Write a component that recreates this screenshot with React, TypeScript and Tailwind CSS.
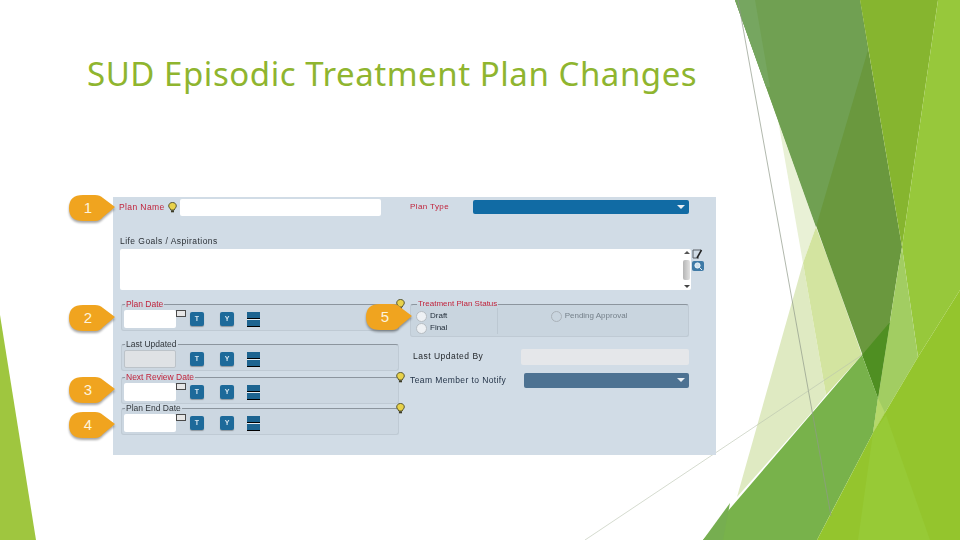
const sans = "font-['Liberation_Sans',Arial,sans-serif]";

function Backdrop() {
  return (
    <svg className="absolute inset-0" width="960" height="540" viewBox="0 0 960 540">
      <polygon points="0,315 36,540 0,540" fill="#9fc63f" />
      <polygon points="778,120 816,227 803,263" fill="#e9f1d6" />
      <polygon points="803,263 826,395 812,412 737,497" fill="#dfeac2" />
      <polygon points="816,227 832,270 862,355 826,395 803,263" fill="#d3e4a0" />
      <polygon points="735,0 860,0 902,247 898,270 878,398 832,270" fill="#6a983e" />
      <polygon points="735,0 860,0 868,50 816,227" fill="#70a052" />
      <polygon points="735,0 755,0 770,87 766,87" fill="#76a660" />
      <polygon points="860,0 938,0 902,247" fill="#86b52f" />
      <polygon points="938,0 960,0 960,290 918,357 902,247" fill="#97c83b" />
      <polygon points="902,247 918,357 873,433 878,398 898,270" fill="#a2cd62" />
      <polygon points="862,355 890,322 878,398" fill="#4f8f22" />
      <polygon points="862,355 878,398 873,433 830,515 817,540 703,540" fill="#78b24b" />
      <polygon points="703,540 730,503 723,540" fill="#76ae50" />
      <polygon points="878,398 873,433 885,413" fill="#b5d86a" />
      <polygon points="960,290 960,540 817,540 873,433 918,357" fill="#94c52d" />
      <polygon points="873,433 858,540 930,540 886,415" fill="#97ca36" />
      <line x1="738" y1="0" x2="831" y2="516" stroke="#8f9a8a" strokeWidth="0.7" />
      <line x1="585" y1="540" x2="862" y2="355" stroke="#b9c2ae" strokeWidth="0.6" />
    </svg>
  );
}

function Callout({ n, className }: { n: number; className: string }) {
  return (
    <div className={`absolute h-[30px] w-[47px] ${className}`}>
      <svg className="absolute inset-0 drop-shadow-[0_2px_1px_rgba(0,0,0,0.35)]" width="47" height="30" viewBox="0 0 47 30">
        <path d="M15 1 H27 Q32 1 35 4 L47 13 L35 23 Q32 27 27 27 H15 Q1 27 1 14 Q1 1 15 1 Z" fill="#f0a41f" />
      </svg>
      <span className={`absolute left-[15px] top-[5px] w-[10px] text-center text-[15px] leading-[18px] text-[#fdf3dc] ${sans}`}>{n}</span>
    </div>
  );
}

function Bulb({ className = '' }: { className?: string }) {
  return (
    <svg className={className} width="9" height="11" viewBox="0 0 9 11">
      <path d="M4.5 .5 C2 .5 .7 2.2 .7 4 C.7 5.6 2.3 6.3 2.8 8 H6.2 C6.7 6.3 8.3 5.6 8.3 4 C8.3 2.2 7 .5 4.5 .5 Z" fill="#e8d24a" stroke="#4b4a26" strokeWidth="0.9" />
      <rect x="3" y="8.3" width="3" height="2" fill="#3d3c28" />
    </svg>
  );
}

function SquareButton({ label }: { label: string }) {
  return (
    <div className="flex h-[14px] w-[14px] items-center justify-center rounded-[2px] bg-[#1d6a9a] text-[7px] font-bold text-[#d7e6f0] shadow-[0_1px_1px_rgba(0,0,0,0.3)]">
      {label}
    </div>
  );
}

function StackButton() {
  return (
    <div className="flex h-[15px] w-[13px] flex-col gap-px bg-[#e6eef4]">
      <div className="flex-1 border-b border-black bg-[#1d6490]" />
      <div className="flex-1 border-b border-black bg-[#1d6490]" />
    </div>
  );
}

function CalendarIcon() {
  return <div className="h-[7px] w-[10px] self-start border border-[#4a4a4a] bg-[#e6e6e6]" />;
}

function DateRow({ legend, required, disabled, bulb, short }: { legend: string; required?: boolean; disabled?: boolean; bulb?: boolean; short?: boolean }) {
  return (
    <div className={`relative w-[278px] ${short ? 'h-[31px]' : 'h-[33px]'}`}>
      <fieldset className="h-[31px] rounded-[3px] border border-[#bfcad4] border-t-[#8c959e] bg-[#ccd7e1]">
        <legend className={`ml-[3px] px-px text-[8.5px] leading-[8px] ${required ? 'text-[#c0243c]' : 'text-[#33383d]'}`}>{legend}</legend>
        <div className="flex items-center pl-[2px] pt-[2px]">
          <div className={`h-[18px] w-[52px] rounded-[2px] ${disabled ? 'border border-[#bcc3c9] bg-[#dfe2e5]' : 'bg-white'}`} />
          {disabled ? <div className="w-[10px]" /> : <CalendarIcon />}
          <div className="ml-[4px] flex items-center gap-[16px]">
            <SquareButton label="T" />
            <SquareButton label="Y" />
          </div>
          <div className="ml-[13px]">
            <StackButton />
          </div>
        </div>
      </fieldset>
      {bulb ? <Bulb className="absolute -right-[6px] -top-[1px]" /> : null}
    </div>
  );
}

function Radio({ label, muted }: { label: string; muted?: boolean }) {
  return (
    <div className="flex h-[12px] items-center gap-[3px]">
      <div className={`h-[11px] w-[11px] rounded-full ${muted ? 'border border-[#aab2b9]' : 'border border-[#b6bdc3] bg-[#eef1f4]'}`} />
      <span className={`text-[8px] ${muted ? 'text-[#75808a]' : 'text-[#1f2a36]'}`}>{label}</span>
    </div>
  );
}

function Select({ color, className }: { color: string; className: string }) {
  return (
    <div className={`flex items-center justify-end rounded-[2px] pr-[4px] ${color} ${className}`}>
      <div className="h-0 w-0 border-x-[4px] border-t-[4px] border-x-transparent border-t-[#e8eef3]" />
    </div>
  );
}

function PlanForm() {
  return (
    <div className={`ml-[113px] mt-[103px] h-[258px] w-[603px] bg-[#d1dce6] ${sans} blur-[0.3px]`}>
      <div className="flex h-[18px] items-center pl-[6px] pt-[2px]">
        <span className="w-[49px] text-[8.5px] tracking-[0.4px] text-[#c0243c]">Plan Name</span>
        <Bulb className="mr-[3px]" />
        <div className="h-[17px] w-[201px] rounded-[2px] bg-white" />
        <span className="ml-[29px] w-[63px] text-[8px] tracking-[0.4px] text-[#c0243c]">Plan Type</span>
        <Select color="bg-[#116ba4]" className="h-[14px] w-[216px]" />
      </div>

      <div className="pl-[7px] pt-[21px] text-[8.5px] leading-[10px] tracking-[0.45px] text-[#2b3036]">Life Goals / Aspirations</div>

      <div className="mt-[3px] flex h-[41px] pl-[7px]">
        <div className="flex h-full w-[571px] justify-end rounded-[2px] bg-white">
          <div className="flex w-[9px] flex-col items-center justify-between py-[2px]">
            <div className="h-0 w-0 border-x-[3px] border-b-[3px] border-x-transparent border-b-[#555]" />
            <div className="h-[20px] w-[7px] rounded-[2px] bg-gradient-to-r from-[#b5b5b5] to-[#e2e2e2]" />
            <div className="h-0 w-0 border-x-[3px] border-t-[3px] border-x-transparent border-t-[#444]" />
          </div>
        </div>
        <div className="flex flex-col gap-[2px] pl-px">
          <svg width="11" height="10" viewBox="0 0 11 10">
            <path d="M1 1 H9 M1 1 V9 H7" fill="none" stroke="#5a6066" />
            <path d="M9.5 1 L5 9" stroke="#222" strokeWidth="1.6" />
          </svg>
          <svg width="12" height="10" viewBox="0 0 12 10">
            <rect width="12" height="10" rx="2" fill="#3f7aa6" />
            <circle cx="5.5" cy="4.5" r="2.6" fill="#cfe2ee" stroke="#f2f7fa" />
            <path d="M7.5 6.5 L10 9" stroke="#e6eef3" />
          </svg>
        </div>
      </div>

      <div className="mt-[10px] flex items-start pl-[8px]">
        <div className="flex flex-col">
          <DateRow legend="Plan Date" required bulb />
          <div className="h-[7px]" />
          <DateRow legend="Last Updated" disabled />
          <DateRow legend="Next Review Date" required bulb short />
          <DateRow legend="Plan End Date" bulb />
        </div>

        <div className="ml-[11px] flex w-[279px] flex-col">
          <fieldset className="flex h-[37px] rounded-[3px] border border-[#bfcad4] border-t-[#8c959e] bg-[#c9d5df]">
            <legend className="ml-[6px] px-px text-[8px] leading-[8px] text-[#c0243c]">Treatment Plan Status</legend>
            <div className="flex w-[86px] flex-col pl-[5px] pt-[2px]">
              <Radio label="Draft" />
              <Radio label="Final" />
            </div>
            <div className="flex flex-1 justify-center border-l border-[#bcc8d2] pr-[8px] pt-[2px]">
              <Radio label="Pending Approval" muted />
            </div>
          </fieldset>

          <div className="mt-[11px] flex h-[17px] items-center pl-[3px]">
            <span className="w-[108px] text-[8.5px] tracking-[0.5px] text-[#23272b]">Last Updated By</span>
            <div className="h-[16px] w-[168px] rounded-[2px] bg-[#e5e7ea]" />
          </div>

          <div className="mt-[7px] flex h-[16px] items-center">
            <span className="w-[114px] text-[8.5px] tracking-[0.4px] text-[#1f2f44]">Team Member to Notify</span>
            <Select color="bg-[#4d7292]" className="h-[15px] w-[165px]" />
          </div>
        </div>
      </div>
    </div>
  );
}

export default function App() {
  return (
    <div className="relative h-[540px] w-[960px] overflow-hidden bg-white">
      <Backdrop />
      <div className="relative pt-[54px]">
        <h1 className="h-[40px] whitespace-nowrap pl-[87px] font-['Noto_Sans',sans-serif] text-[33px] leading-[40px] tracking-[0.55px] text-[#8fb52f]">
          SUD Episodic Treatment Plan Changes
        </h1>
        <PlanForm />
      </div>
      <Callout n={1} className="left-[68px] top-[194px]" />
      <Callout n={2} className="left-[68px] top-[304px]" />
      <Callout n={5} className="left-[365px] top-[303px]" />
      <Callout n={3} className="left-[68px] top-[376px]" />
      <Callout n={4} className="left-[68px] top-[411px]" />
    </div>
  );
}
